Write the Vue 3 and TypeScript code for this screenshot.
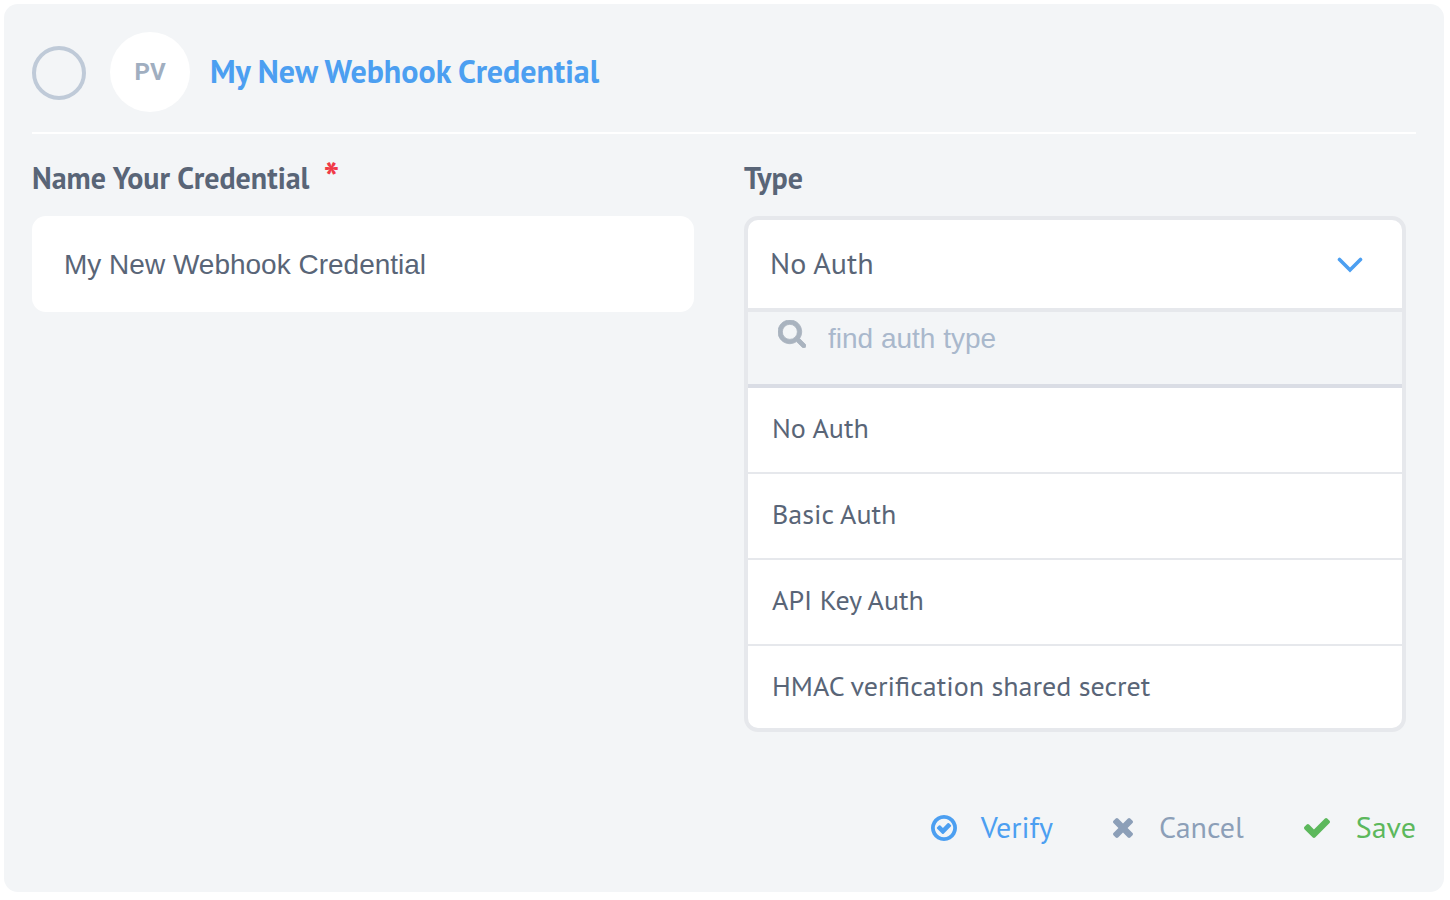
<script setup lang="ts">
import { computed, ref } from 'vue'

const name = ref('My New Webhook Credential')
const authTypes: string[] = ['No Auth', 'Basic Auth', 'API Key Auth', 'HMAC verification shared secret']
const selected = ref('No Auth')
const search = ref('')
const open = ref(true)

const visibleTypes = computed(() =>
  authTypes.filter((t) => t.toLowerCase().includes(search.value.toLowerCase())),
)

function choose(type: string) {
  selected.value = type
}
</script>

<template>
  <form class="card" @submit.prevent>
    <header class="header">
      <input class="radio" type="radio" name="credential" aria-label="Select credential" />
      <span class="avatar">PV</span>
      <h1 class="title">{{ name }}</h1>
    </header>

    <div class="fields">
      <div class="field">
        <label class="label" for="cred-name">Name Your Credential<span class="required">*</span></label>
        <input id="cred-name" v-model="name" class="text-input" type="text" required />
      </div>

      <div class="field">
        <label class="label" for="cred-type">Type</label>
        <div class="dropdown">
          <button
            id="cred-type"
            class="trigger"
            type="button"
            aria-haspopup="listbox"
            :aria-expanded="open"
            @click="open = !open"
          >
            <span class="trigger-text">{{ selected }}</span>
            <svg class="chevron" viewBox="0 0 26 16" aria-hidden="true">
              <path d="M2.5 2.5L13 13L23.500 2.500" fill="none" stroke="currentColor" stroke-width="3.600" stroke-linecap="round" />
            </svg>
          </button>
          <template v-if="open">
            <div class="search">
              <svg class="search-icon" viewBox="64 128 1664 1664" aria-hidden="true">
                <path
                  fill="currentColor"
                  stroke="currentColor"
                  stroke-width="50"
                  d="M1216 832q0-185-131.5-316.5t-316.5-131.5-316.5 131.5-131.5 316.5 131.5 316.5 316.5 131.5 316.5-131.5 131.5-316.5zm512 832q0 52-38 90t-90 38q-54 0-90-38l-343-342q-179 124-399 124-143 0-273.5-55.5t-225-150-150-225-55.5-273.5 55.5-273.5 150-225 225-150 273.5-55.5 273.5 55.5 225 150 150 225 55.5 273.5q0 220-124 399l343 343q37 37 37 90z"
                />
              </svg>
              <input v-model="search" class="search-input" type="text" placeholder="find auth type" aria-label="find auth type" />
            </div>
            <ul class="options" role="listbox">
              <li v-for="type in visibleTypes" :key="type" class="option" role="option" :aria-selected="type === selected">
                <button class="option-button" type="button" @click="choose(type)">{{ type }}</button>
              </li>
            </ul>
          </template>
        </div>
      </div>
    </div>

    <footer class="actions">
      <button class="action verify" type="button">
        <svg class="icon-verify" viewBox="128 128 1536 1536" aria-hidden="true">
          <path
            fill="currentColor"
            d="M1299 813l-422 422q-19 19-45 19t-45-19l-294-294q-19-19-19-45t19-45l102-102q19-19 45-19t45 19l147 147 275-275q19-19 45-19t45 19l102 102q19 19 19 45t-19 45zm141 83q0-148-73-273t-198-198-273-73-273 73-198 198-73 273 73 273 198 198 273 73 273-73 198-198 73-273zm224 0q0 209-103 385.5t-279.5 279.5-385.5 103-385.5-103-279.5-279.5-103-385.5 103-385.5 279.5-279.5 385.5-103 385.5 103 279.5 279.5 103 385.5z"
          />
        </svg>
        <span class="action-text">Verify</span>
      </button>
      <button class="action cancel" type="button">
        <svg class="icon-cancel" viewBox="302 366 1188 1188" aria-hidden="true">
          <path
            fill="currentColor"
            d="M1490 1322q0 40-28 68l-136 136q-28 28-68 28t-68-28l-294-294-294 294q-28 28-68 28t-68-28l-136-136q-28-28-28-68t28-68l294-294-294-294q-28-28-28-68t28-68l136-136q28-28 68-28t68 28l294 294 294-294q28-28 68-28t68 28l136 136q28 28 28 68t-28 68l-294 294 294 294q28 28 28 68z"
          />
        </svg>
        <span class="action-text">Cancel</span>
      </button>
      <button class="action save" type="submit">
        <svg class="icon-save" viewBox="121 334 1550 1188" aria-hidden="true">
          <path
            fill="currentColor"
            d="M1671 566q0 40-28 68l-724 724-136 136q-28 28-68 28t-68-28l-136-136-362-362q-28-28-28-68t28-68l136-136q28-28 68-28t68 28l294 295 656-657q28-28 68-28t68 28l136 136q28 28 28 68z"
          />
        </svg>
        <span class="action-text">Save</span>
      </button>
    </footer>
  </form>
</template>

<style>
body {
  background: #ffffff;
}
</style>

<style scoped>
* {
  box-sizing: border-box;
}

button {
  border: 0;
  padding: 0;
  background: none;
  color: inherit;
  font: inherit;
  text-align: left;
  cursor: pointer;
}

.card {
  margin: 4px 6px 8px 4px;
  padding: 28px;
  border-radius: 14px;
  background: #f3f5f7;
  color: #596577;
  font-family: "PT Sans", Lato, sans-serif;
  font-size: 28px;
}

.header {
  display: flex;
  align-items: center;
  padding-bottom: 20px;
  border-bottom: 2px solid #ffffff;
}

.radio {
  appearance: none;
  flex: none;
  width: 54px;
  height: 54px;
  margin: 2px 24px 0 0;
  border: 4px solid #bfcad8;
  border-radius: 50%;
}

.avatar {
  display: flex;
  flex: none;
  align-items: center;
  justify-content: center;
  width: 80px;
  height: 80px;
  margin-right: 20px;
  border-radius: 50%;
  background: #ffffff;
  color: #a0aec0;
  font-family: Roboto, sans-serif;
  font-size: 24px;
  font-weight: 700;
}

.title {
  margin: 0;
  padding-bottom: 2px;
  color: #4c9ff1;
  font-size: 32px;
  font-weight: 700;
  line-height: 40px;
}

.fields {
  display: grid;
  grid-template-columns: 1fr 1fr;
  align-items: start;
  gap: 50px;
  padding: 24px 10px 0 0;
}

.field {
  display: flex;
  flex-direction: column;
}

.label {
  display: flex;
  height: 40px;
  margin-bottom: 18px;
  font-size: 30px;
  font-weight: 700;
  line-height: 40px;
}

.required {
  margin-left: 14px;
  color: #f03a47;
  font-size: 42px;
}

.text-input {
  width: 100%;
  height: 96px;
  padding: 2px 32px 0;
  border: 0;
  border-radius: 14px;
  background: #ffffff;
  color: inherit;
  font-family: "Liberation Sans", sans-serif;
  font-size: 28px;
}

.dropdown {
  overflow: hidden;
  border: 4px solid #e6e8ec;
  border-radius: 14px;
  background: #ffffff;
}

.trigger {
  display: flex;
  align-items: center;
  justify-content: space-between;
  width: 100%;
  height: 88px;
  padding: 0 39px 0 22px;
  font-size: 30px;
}

.trigger-text {
  padding-bottom: 4px;
}

.chevron {
  width: 26px;
  height: 16px;
  margin-top: 2px;
  color: #4c9ff1;
}

.search {
  display: flex;
  align-items: flex-start;
  gap: 22px;
  height: 76px;
  padding: 8px 30px 0;
  border-top: 4px solid #e6e8ec;
  border-bottom: 4px solid #dadde5;
  background: #f3f5f7;
  height: 80px;
}

.search-icon {
  flex: none;
  width: 28px;
  height: 28px;
  color: #a9b3bf;
}

.search-input {
  flex: 1;
  min-width: 0;
  height: 36px;
  padding: 2px 0 0;
  border: 0;
  outline: 0;
  background: none;
  color: inherit;
  font-family: "Liberation Sans", sans-serif;
  font-size: 28px;
}

.search-input::placeholder {
  color: #a9b8cc;
}

.options {
  margin: 0;
  padding: 0;
  list-style: none;
}

.option + .option {
  border-top: 2px solid #e6e8ec;
}

.option-button {
  display: block;
  width: 100%;
  height: 84px;
  padding: 0 24px 6px;
}

.option:last-child .option-button {
  height: 82px;
  padding-bottom: 4px;
}

.actions {
  display: flex;
  justify-content: flex-end;
  gap: 60px;
  padding: 76px 0 16px;
}

.action {
  display: flex;
  align-items: center;
  gap: 24px;
  height: 40px;
  font-size: 30px;
  line-height: 38px;
}

.action-text {
  padding-bottom: 2px;
}

.verify {
  color: #4c9ff1;
}

.cancel {
  gap: 26px;
  color: #8c9fb8;
}

.save {
  gap: 26px;
  color: #5cb85c;
}

.icon-verify {
  width: 26px;
  height: 26px;
}

.icon-cancel {
  width: 20px;
  height: 20px;
}

.icon-save {
  width: 26px;
  height: 20px;
}
</style>
